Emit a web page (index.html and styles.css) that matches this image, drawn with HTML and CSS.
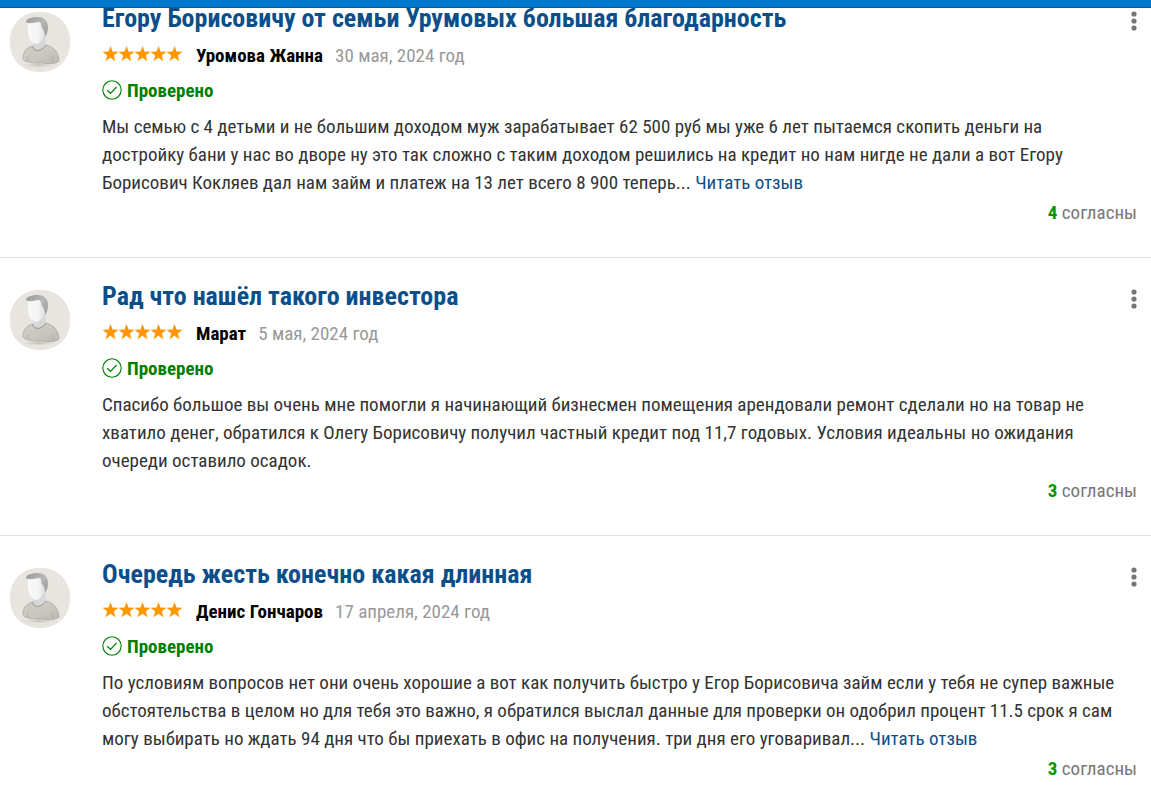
FILE: index.html
```html
<!DOCTYPE html>
<html lang="ru">
<head>
    <meta charset="UTF-8">
    <meta name="viewport" content="width=device-width, initial-scale=1.0">
    <title>Отзывы</title>
    <link rel="stylesheet" href="styles.css">
</head>
<body>

    <!-- shared icons -->
    <svg class="sprite" aria-hidden="true">
        <defs>
            <linearGradient id="hair" x1="0" y1="0" x2="1" y2="1">
                <stop offset="0" stop-color="#989898"/>
                <stop offset="0.5" stop-color="#b8b8b8"/>
                <stop offset="1" stop-color="#989898"/>
            </linearGradient>
            <linearGradient id="face" x1="0" y1="0" x2="1" y2="0">
                <stop offset="0" stop-color="#fafafa"/>
                <stop offset="0.6" stop-color="#f4f4f4"/>
                <stop offset="1" stop-color="#dcdede"/>
            </linearGradient>
            <linearGradient id="shirt" x1="0" y1="0" x2="1" y2="1">
                <stop offset="0" stop-color="#d2cfc9"/>
                <stop offset="0.6" stop-color="#c9c5be"/>
                <stop offset="1" stop-color="#bab7b2"/>
            </linearGradient>
            <radialGradient id="shade">
                <stop offset="0" stop-color="#bcb8b2"/>
                <stop offset="1" stop-color="#e8e4df" stop-opacity="0"/>
            </radialGradient>
        </defs>
        <symbol id="person" viewBox="0 0 60 60">
            <rect width="60" height="60" rx="28" fill="#e8e5e0"/>
            <ellipse cx="29" cy="53" rx="20" ry="3" fill="url(#shade)"/>
            <path d="M13 47 C13 41 15 36 23 34 C24 40 31 40 36 33 C44 35 49 41 49 49 C46 52 38 52 33 51 C26 51 15 51 13 47 Z" fill="url(#shirt)" stroke="#a5a29d" stroke-width="0.700"/>
            <path d="M23 28 L23 35 Q28 40 34 36 L36 33 L35 22 Z" fill="#d6d8d8"/>
            <path d="M22 34 C24 40 31 40 36 33" fill="none" stroke="#9c9c9c" stroke-width="1"/>
            <path d="M42 44 Q43 47 43 51 M18 44 Q17 46 18 49" fill="none" stroke="#aaa7a2" stroke-width="0.700"/>
            <path d="M18 10 L32 9 Q35 13 35 19 C35 25 31 31 26 32 C20 31 17 24 18 10 Z" fill="url(#face)"/>
            <path d="M16 9 C17 7 22 5 28 5 C34 5 38 9 38 15 C38 19 37 22 35 25 C35 21 34 18 32 16 C31 14 32 11 29 10 C25 10 22 12 18 11 Q16 11 16 9 Z" fill="url(#hair)"/>
        </symbol>
        <symbol id="stars" viewBox="0 0 82 16">
            <g fill="#ff9800">
                <path id="star" d="M8.500 0 L10.500 5.600 16.500 5.800 11.800 9.400 13.500 15.200 8.500 11.800 3.500 15.200 5.200 9.400 0.500 5.800 6.500 5.600 Z"/>
                <use href="#star" x="16"/>
                <use href="#star" x="32"/>
                <use href="#star" x="48"/>
                <use href="#star" x="64"/>
            </g>
        </symbol>
        <symbol id="check" viewBox="0 0 20 20">
            <circle cx="10" cy="10" r="9.200" fill="none" stroke="#008000" stroke-width="1.100"/>
            <path d="M5.200 10.200 L8.500 13.300 L14.600 7" fill="none" stroke="#008000" stroke-width="1.200"/>
        </symbol>
        <symbol id="dots" viewBox="0 0 6 20">
            <g fill="#757575">
                <circle cx="3" cy="3" r="2.600"/>
                <circle cx="3" cy="10" r="2.600"/>
                <circle cx="3" cy="17" r="2.600"/>
            </g>
        </symbol>
    </svg>

    <header class="topbar"></header>

    <main class="reviews">
        <article class="review">
            <svg class="avatar" aria-hidden="true"><use href="#person"/></svg>
            <div class="content">
                <div class="heading">
                    <h2 class="title">Егору Борисовичу от семьи Урумовых большая благодарность</h2>
                    <button class="menu" type="button" aria-label="Меню"><svg class="dots"><use href="#dots"/></svg></button>
                </div>
                <div class="meta">
                    <svg class="stars" role="img" aria-label="5 из 5"><use href="#stars"/></svg>
                    <span class="author">Уромова Жанна</span>
                    <time class="date" datetime="2024-05-30">30 мая, 2024 год</time>
                </div>
                <div class="verified"><svg class="check" aria-hidden="true"><use href="#check"/></svg>Проверено</div>
                <p class="text">Мы семью с 4 детьми и не большим доходом муж зарабатывает 62 500 руб мы уже 6 лет пытаемся скопить деньги на<br>
                достройку бани у нас во дворе ну это так сложно с таким доходом решились на кредит но нам нигде не дали а вот Егору<br>
                Борисович Кокляев дал нам займ и платеж на 13 лет всего 8 900 теперь... <a class="more" href="#">Читать отзыв</a></p>
                <div class="agree"><b class="count">4</b> согласны</div>
            </div>
        </article>

        <article class="review">
            <svg class="avatar" aria-hidden="true"><use href="#person"/></svg>
            <div class="content">
                <div class="heading">
                    <h2 class="title">Рад что нашёл такого инвестора</h2>
                    <button class="menu" type="button" aria-label="Меню"><svg class="dots"><use href="#dots"/></svg></button>
                </div>
                <div class="meta">
                    <svg class="stars" role="img" aria-label="5 из 5"><use href="#stars"/></svg>
                    <span class="author">Марат</span>
                    <time class="date" datetime="2024-05-05">5 мая, 2024 год</time>
                </div>
                <div class="verified"><svg class="check" aria-hidden="true"><use href="#check"/></svg>Проверено</div>
                <p class="text">Спасибо большое вы очень мне помогли я начинающий бизнесмен помещения арендовали ремонт сделали но на товар не<br>
                хватило денег, обратился к Олегу Борисовичу получил частный кредит под 11,7 годовых. Условия идеальны но ожидания<br>
                очереди оставило осадок.</p>
                <div class="agree"><b class="count">3</b> согласны</div>
            </div>
        </article>

        <article class="review">
            <svg class="avatar" aria-hidden="true"><use href="#person"/></svg>
            <div class="content">
                <div class="heading">
                    <h2 class="title">Очередь жесть конечно какая длинная</h2>
                    <button class="menu" type="button" aria-label="Меню"><svg class="dots"><use href="#dots"/></svg></button>
                </div>
                <div class="meta">
                    <svg class="stars" role="img" aria-label="5 из 5"><use href="#stars"/></svg>
                    <span class="author">Денис Гончаров</span>
                    <time class="date" datetime="2024-04-17">17 апреля, 2024 год</time>
                </div>
                <div class="verified"><svg class="check" aria-hidden="true"><use href="#check"/></svg>Проверено</div>
                <p class="text">По условиям вопросов нет они очень хорошие а вот как получить быстро у Егор Борисовича займ если у тебя не супер важные<br>
                обстоятельства в целом но для тебя это важно, я обратился выслал данные для проверки он одобрил процент 11.5 срок я сам<br>
                могу выбирать но ждать 94 дня что бы приехать в офис на получения. три дня его уговаривал... <a class="more" href="#">Читать отзыв</a></p>
                <div class="agree"><b class="count">3</b> согласны</div>
            </div>
        </article>
    </main>

</body>
</html>
```
FILE: styles.css
```css
body {
    font-family: "Roboto Condensed", "Liberation Sans Narrow", Roboto, sans-serif;
    font-size: 19px;
    color: #333;
    background-color: #fff;
    margin: 0;
    overflow: hidden;
}
.sprite {
    position: absolute;
    width: 0;
    height: 0;
}
.topbar {
    position: fixed;
    top: 0;
    left: 0;
    right: 0;
    height: 7px;
    background-color: #0078d0;
    border-bottom: 1px solid #005a9e;
}
.reviews {
    margin-top: -20px; /* first review runs under the top bar */
}
.review {
    display: flex;
    gap: 32px;
    padding: 20px 14px 28px 10px;
    border-bottom: 1px solid #e0e0e0;
}
.avatar {
    flex: none;
    width: 60px;
    height: 60px;
    margin-top: 12px;
}
.content {
    flex: 1;
    min-width: 0;
}
.heading {
    display: flex;
    justify-content: space-between;
    align-items: center;
    height: 36px;
}
.title {
    margin: 0;
    font-size: 26px;
    line-height: 36px;
    font-weight: bold;
    color: #0b4f8a;
}
.menu {
    display: flex;
    padding: 6px 0 0;
    border: 0;
    background: none;
    cursor: pointer;
}
.dots {
    width: 6px;
    height: 20px;
}
.meta {
    display: flex;
    align-items: center;
    height: 39px;
}
.stars {
    width: 82px;
    height: 16px;
    margin: 0 12px 4px 0;
}
.author {
    font-weight: bold;
    color: #000;
    margin-right: 12px;
}
.date {
    color: #999;
}
.verified {
    display: flex;
    align-items: center;
    gap: 5px;
    height: 30px;
    font-weight: bold;
    color: #008000;
}
.check {
    width: 20px;
    height: 20px;
}
.text {
    margin: 8px 0 0;
    line-height: 28px;
}
.more {
    color: #0b4f8a;
    text-decoration: none;
}
.agree {
    line-height: 32px;
    text-align: right;
    color: #777;
}
.count {
    color: #009600;
}
```
